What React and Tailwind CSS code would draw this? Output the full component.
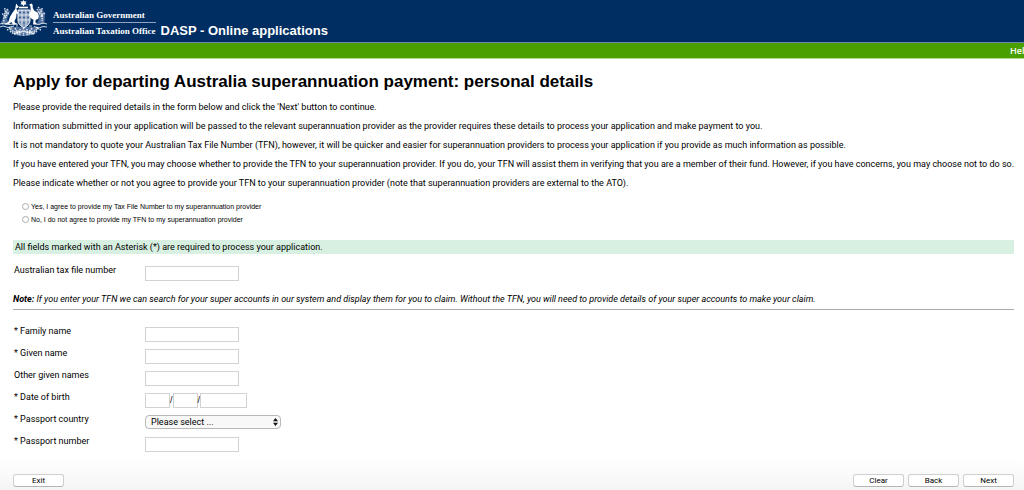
const intro = [
  "Please provide the required details in the form below and click the 'Next' button to continue.",
  "Information submitted in your application will be passed to the relevant superannuation provider as the provider requires these details to process your application and make payment to you.",
  "It is not mandatory to quote your Australian Tax File Number (TFN), however, it will be quicker and easier for superannuation providers to process your application if you provide as much information as possible.",
  "If you have entered your TFN, you may choose whether to provide the TFN to your superannuation provider. If you do, your TFN will assist them in verifying that you are a member of their fund. However, if you have concerns, you may choose not to do so.",
  "Please indicate whether or not you agree to provide your TFN to your superannuation provider (note that superannuation providers are external to the ATO).",
];

const inputClass = "block h-[15px] border border-[#d2d2d2] bg-white px-1 outline-none";

function Crest() {
  return (
    <svg viewBox="0 0 48 40" className="h-10 w-12 shrink-0" fill="none" stroke="#fff" aria-hidden="true">
      {/* foliage behind the animals */}
      <path d="M6 9l4 2-3 8 2 5-7 1-1-3 3-5zM38 9l5 1 2 6-1 8-7 0 2-5zM10 27h28l-4 7-6 2h-9l-6-2z" fill="#4f6f9d" stroke="none" />
      {/* star and wreath */}
      <path d="M23.5 0l1 1.6 2-.4-1 1.7 1.2 1.6-2 .1-1.2 1.6-1.2-1.6-2-.1 1.2-1.6-1-1.700 2 .4z" fill="#fff" stroke="none" />
      <path d="M19 7.500h9" strokeWidth="1.600" />
      {/* shield */}
      <path d="M18 10h12v10c0 4-3 6-6 8-3-2-6-4-6-8z" fill="#7f97ba" strokeWidth="1" />
      <path d="M18 15h12M18 20h12M22 10v16M26 10v16" strokeWidth=".7" />
      <path d="M19.500 12.500h1M23.500 17.500h1M27.500 12.500h1M23.500 12.500h1M19.500 17.500h1M27.500 17.500h1M23.500 23h1" stroke="#002d62" strokeWidth="1.200" />
      {/* kangaroo */}
      <path d="M16.500 3.500l.8 1.800 1.400 1.200-.6 1.200-1.600.3.500 3.200 1.500 1.800-.5.900-1.500-.3-.3 3.900-1.800 3.700.8 1.700 2.400.8v1.100l-4.700-.2-1.500-2.500-2.500 2-4.500.8 4-3.200 1.600-5 3-4.700 2.300-3.200.4-3.200z" fill="#fff" stroke="none" />
      {/* emu */}
      <path d="M29.500 4.500l1.800-1 1.300 1 .2 3.500 1.300 2.500 3.500 2 1.300 3.500-.7 3-2.500.8-.3 2.500 1.800 1.600h-4l.2-4.200-2.800-1.700-1.400-3.500 1.500-3.900-.3-4.600-1.200-1z" fill="#fff" stroke="none" />
      {/* wattle */}
      <g strokeWidth="1.500" strokeDasharray="1.600 .8" strokeOpacity=".8">
        <path d="M8 9C4 13 3 18 4 22M5 8c-1 3 1 4 3 6M2 14c2 0 3 2 4 4M9 13c-2 1-3 3-4 5" />
        <path d="M38 7c4 4 5 9 4 14M42 8c0 3-2 4-3 6M45 13c-2 1-3 2-4 4M37 9c1 3 3 5 5 7" />
        <path d="M9 27c2 5 7 6 14 4M38 27c-2 5-7 6-14 4M10 31c4 4 8 3 13 0M37 31c-4 4-8 3-13 0" />
        <path d="M15 28c2 3 3 4 3 7M32 28c-2 3-3 4-3 7M23.500 28v8M20 29v6M27 29v6" />
        <path d="M14 34l5-3M34 34l-5-3M7 30l5-2M41 30l-5-2" />
      </g>
      {/* scroll */}
      <path d="M0 24l4-1 5 1.500 6-.5M0 27l3-1 5 1.500 6-1.500M33 24l6 .5 4-1.500 4 1M34 26.500l5 1.500 4-1.500 4 .5M16 26h2M29 26h3" strokeWidth="1" strokeOpacity=".8" />
    </svg>
  );
}

function Header() {
  return (
    <header>
      <div className="flex h-[43px] items-start border-b border-[#6f88aa] bg-[#002d62] text-white">
        <Crest />
        <div className="ml-[5px] mt-[8px] font-['Liberation_Serif',serif] text-[9px] font-bold leading-[14px] whitespace-nowrap">
          <div className="border-b border-[#8fa3bf]">Australian Government</div>
          <div className="pt-px">Australian Taxation Office</div>
        </div>
        <div className="ml-[5px] mt-[23px] font-['Liberation_Sans',Arial,sans-serif] text-[13px] font-bold leading-[16px] whitespace-nowrap">
          DASP - Online applications
        </div>
      </div>
      <nav className="flex h-4 items-center justify-end overflow-hidden border-b border-[#b4d98c] bg-[#4aa000]">
        <a href="#help" className="-mr-[6px] font-['Open_Sans',sans-serif] text-[9px] font-semibold text-white">
          Help
        </a>
      </nav>
    </header>
  );
}

function Field({ id, label, children }) {
  return (
    <div className="flex h-[22px] items-start">
      <label htmlFor={id} className="w-[132px] shrink-0 pl-px leading-[8px] whitespace-nowrap">
        {label}
      </label>
      {children}
    </div>
  );
}

function Button({ children }) {
  return (
    <button
      type="button"
      className="h-[13px] w-[51px] rounded-[3px] border border-[#cfcfcf] border-b-[#b5b5b5] bg-white text-[8px] leading-[11px] text-black"
    >
      {children}
    </button>
  );
}

export default function App() {
  return (
    <div className="min-h-screen overflow-x-hidden bg-white font-[Roboto,Arial,sans-serif] text-[9px] leading-[11px] text-black">
      <Header />
      <form>
        <div className="pl-[13px] pr-[10px]">
          <h1 className="mt-3 font-['Liberation_Sans',Arial,sans-serif] text-[17px] font-bold leading-[22px]">
            Apply for departing Australia superannuation payment: personal details
          </h1>
          <div className="mt-[9px] flex flex-col gap-2 whitespace-nowrap">
            {intro.map((text) => (
              <p key={text}>{text}</p>
            ))}
          </div>

          <fieldset className="mt-[11px] pl-[9px] font-['Liberation_Sans',Arial,sans-serif] text-[7px] leading-[13px]">
            <label className="flex items-center gap-[2px]">
              <input type="radio" name="agree" value="yes" className="size-[7px] appearance-none rounded-full border border-[#aaa]" />
              Yes, I agree to provide my Tax File Number to my superannuation provider
            </label>
            <label className="flex items-center gap-[2px]">
              <input type="radio" name="agree" value="no" className="size-[7px] appearance-none rounded-full border border-[#aaa]" />
              No, I do not agree to provide my TFN to my superannuation provider
            </label>
          </fieldset>

          <p className="mt-[14px] bg-[#d8f0e1] pl-[2px] leading-[14px]">
            All fields marked with an Asterisk (*) are required to process your application.
          </p>

          <div className="mt-3">
            <Field id="tfn" label="Australian tax file number">
              <input id="tfn" type="text" className={`${inputClass} w-[94px]`} />
            </Field>
          </div>

          <p className="mt-[6px] italic whitespace-nowrap">
            <b>Note:</b> If you enter your TFN we can search for your super accounts in our system and display them for
            you to claim. Without the TFN, you will need to provide details of your super accounts to make your claim.
          </p>
          <hr className="mt-1 border-[#aaa]" />

          <div className="mt-[17px]">
            <Field id="family" label="* Family name">
              <input id="family" type="text" className={`${inputClass} w-[94px]`} />
            </Field>
            <Field id="given" label="* Given name">
              <input id="given" type="text" className={`${inputClass} w-[94px]`} />
            </Field>
            <Field id="other" label="Other given names">
              <input id="other" type="text" className={`${inputClass} w-[94px]`} />
            </Field>
            <Field id="dob" label="* Date of birth">
              <div className="flex items-center font-['Liberation_Sans',Arial,sans-serif]">
                <input id="dob" type="text" aria-label="Day" className={`${inputClass} w-[25px]`} />
                <span>/</span>
                <input type="text" aria-label="Month" className={`${inputClass} w-[25px]`} />
                <span>/</span>
                <input type="text" aria-label="Year" className={`${inputClass} w-[47px]`} />
              </div>
            </Field>
            <Field id="country" label="* Passport country">
              <div className="grid w-[136px] items-center">
                <select
                  id="country"
                  className="col-start-1 row-start-1 h-[14px] appearance-none rounded-[4px] border border-[#b8b8b8] bg-[#f8f8f8] pl-[5px] text-[9px] leading-[11px]"
                >
                  <option>Please select ...</option>
                </select>
                <svg viewBox="0 0 5 8" className="pointer-events-none col-start-1 row-start-1 mr-[3px] h-2 w-[5px] justify-self-end">
                  <path d="M2.500 0L5 3.200H0zM2.500 8L0 4.800h5z" fill="#111" />
                </svg>
              </div>
            </Field>
            <Field id="passport" label="* Passport number">
              <input id="passport" type="text" className={`${inputClass} w-[94px]`} />
            </Field>
          </div>
        </div>

        <div className="flex items-end justify-between bg-linear-to-b from-white to-[#f5f5f5] pt-[15px] pr-[10px] pb-[3px] pl-[13px]">
          <Button>Exit</Button>
          <div className="flex gap-1">
            <Button>Clear</Button>
            <Button>Back</Button>
            <Button>Next</Button>
          </div>
        </div>
      </form>
    </div>
  );
}
